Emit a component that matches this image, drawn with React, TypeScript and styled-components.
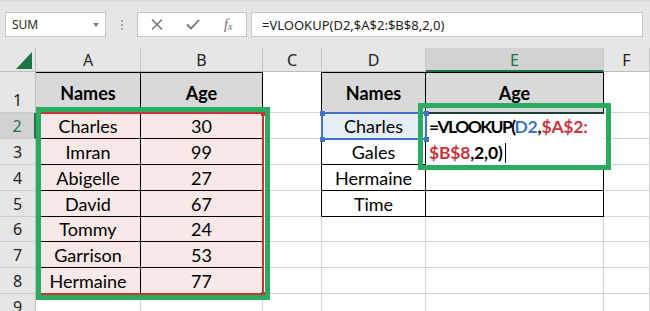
import React from "react";
import styled, { createGlobalStyle } from "styled-components";

const GlobalStyle = createGlobalStyle`
  html, body {
    margin: 0;
    padding: 0;
    background: #fff;
  }
  body {
    overflow: hidden;
  }
`;

const EXCEL_GREEN = "#217346";
const GRID_LINE = "#d4d4d4";
const INK = "#000";
const REF_RED = "#c9343c";
const REF_BLUE = "#3f72c8";
const CALLOUT = "#2bab5f";

const Window = styled.div`
  width: 650px;
  height: 311px;
  overflow: hidden;
  background: #fff;
`;

/* ---------- formula bar ---------- */

const FormulaStrip = styled.div`
  height: 48px;
  box-sizing: border-box;
  padding: 12px 7px 0 5px;
  display: flex;
  align-items: flex-start;
  background: #e6e6e6;
  box-shadow: inset 0 3px 3px -2px rgba(0, 0, 0, 0.1);
`;

const NameBox = styled.div`
  width: 101px;
  height: 25px;
  box-sizing: border-box;
  border: 1px solid #c6c6c6;
  background: #fff;
  display: flex;
  align-items: center;
  justify-content: space-between;
  padding: 0 6px 0 6px;
  font-family: "Noto Sans", sans-serif;
  font-size: 12px;
  color: #262626;
`;

const Caret = styled.span`
  width: 0;
  height: 0;
  border-left: 3.5px solid transparent;
  border-right: 3.5px solid transparent;
  border-top: 4px solid #7a7a7a;
`;

const Grip = styled.div`
  width: 31px;
  height: 25px;
  display: flex;
  flex-direction: column;
  align-items: center;
  justify-content: center;
  gap: 2px;

  span {
    width: 2px;
    height: 2px;
    background: #a8a8a8;
  }
`;

const ButtonGroup = styled.div`
  width: 110px;
  height: 25px;
  box-sizing: border-box;
  border: 1px solid #c6c6c6;
  background: #fff;
  display: flex;
  align-items: center;
  padding-left: 1px;
`;

const BarButton = styled.div`
  width: 36px;
  height: 23px;
  display: flex;
  align-items: center;
  justify-content: center;
  color: #6e6e6e;
`;

const FxLabel = styled.span`
  font-family: "Liberation Serif", serif;
  font-style: italic;
  font-size: 14px;
  color: #6a6a6a;

  sub {
    font-size: 10px;
    vertical-align: -1px;
  }
`;

const FormulaInput = styled.div`
  flex: 1;
  height: 25px;
  margin-left: 4px;
  box-sizing: border-box;
  border: 1px solid #c6c6c6;
  background: #fff;
  display: flex;
  align-items: center;
  padding-left: 10px;
  font-family: "Noto Sans", sans-serif;
  font-size: 13px;
  color: #222;
`;

/* ---------- sheet grid ---------- */

const Sheet = styled.div`
  display: grid;
  grid-template-columns: 36px 105px 122px 59px 104px 178px 46px;
  grid-template-rows: 24px 41px repeat(4, 26px) 25px repeat(3, 26px);
`;

const Corner = styled.div`
  grid-row: 1;
  grid-column: 1;
  background: #e6e6e6;
  box-sizing: border-box;
  border-right: 1px solid #bdbdbd;
  border-bottom: 1px solid #bdbdbd;
  display: flex;
  align-items: flex-end;
  justify-content: flex-end;
  padding: 0 3px 2px 0;
`;

const ColHead = styled.div<{ $col: number; $active?: boolean }>`
  grid-row: 1;
  grid-column: ${(p) => p.$col};
  box-sizing: border-box;
  background: ${(p) => (p.$active ? "#d2d2d2" : "#e6e6e6")};
  border-right: 1px solid #c6c6c6;
  border-bottom: ${(p) =>
    p.$active ? `2px solid ${EXCEL_GREEN}` : "1px solid #bdbdbd"};
  display: flex;
  align-items: center;
  justify-content: center;
  padding-top: 1px;
  font-family: "Noto Sans", sans-serif;
  font-size: 16px;
  color: ${(p) => (p.$active ? EXCEL_GREEN : "#222")};
`;

const RowHead = styled.div<{ $row: number; $active?: boolean }>`
  grid-row: ${(p) => p.$row};
  grid-column: 1;
  box-sizing: border-box;
  background: ${(p) => (p.$active ? "#d2d2d2" : "#e6e6e6")};
  border-bottom: 1px solid #cbcbcb;
  border-right: ${(p) =>
    p.$active ? `2px solid ${EXCEL_GREEN}` : "1px solid #bdbdbd"};
  display: flex;
  align-items: flex-end;
  justify-content: center;
  padding-bottom: 1px;
  font-family: "Noto Sans", sans-serif;
  font-size: 16px;
  line-height: 22px;
  color: ${(p) => (p.$active ? EXCEL_GREEN : "#222")};
`;

const Cell = styled.div<{
  $row: number;
  $col: number;
  $fill: string;
  $right: string;
  $bottom: string;
  $top?: string;
  $bold?: boolean;
}>`
  grid-row: ${(p) => p.$row};
  grid-column: ${(p) => p.$col};
  box-sizing: border-box;
  background: ${(p) => p.$fill};
  border-right: 1px solid ${(p) => p.$right};
  border-bottom: 1px solid ${(p) => p.$bottom};
  border-top: ${(p) => (p.$top ? `1px solid ${p.$top}` : "none")};
  display: flex;
  align-items: center;
  justify-content: center;
  font-family: Lato, "Liberation Sans", sans-serif;
  font-size: 18px;
  font-weight: ${(p) => (p.$bold ? 700 : 400)};
  color: #000;
  white-space: nowrap;
`;

/* cell being edited, grown over the row below */
const EditBox = styled.div`
  grid-row: 3 / 5;
  grid-column: 6;
  position: relative;
  z-index: 1;
  margin-top: -1px;
  background: #fff;
  border-top: 2px solid #1d3f2c;
  padding: 0 0 0 3px;
  font-family: Lato, "Liberation Sans", sans-serif;
  font-size: 17.5px;
  font-weight: 700;
  letter-spacing: -0.2px;
  line-height: 26px;
  color: #000;
  white-space: nowrap;
`;

const FnName = styled.span`
  letter-spacing: -1.6px;
`;

const Ref = styled.span<{ $color: string }>`
  color: ${(p) => p.$color};
`;

const TextCursor = styled.span`
  display: inline-block;
  width: 1px;
  height: 20px;
  margin-left: 3px;
  background: #000;
  vertical-align: -4px;
`;

const RefOutline = styled.div<{
  $rows: string;
  $cols: string;
  $color: string;
  $margin: string;
}>`
  grid-row: ${(p) => p.$rows};
  grid-column: ${(p) => p.$cols};
  position: relative;
  z-index: 2;
  margin: ${(p) => p.$margin};
  border: 2px solid ${(p) => p.$color};
  pointer-events: none;
`;

const Handle = styled.span<{ $color: string; $h: "left" | "right"; $v: "top" | "bottom" }>`
  position: absolute;
  width: 5px;
  height: 5px;
  background: ${(p) => p.$color};
  ${(p) => p.$h}: -3.5px;
  ${(p) => p.$v}: -3.5px;
`;

const Callout = styled.div<{ $rows: string; $cols: string; $margin: string }>`
  grid-row: ${(p) => p.$rows};
  grid-column: ${(p) => p.$cols};
  position: relative;
  z-index: 3;
  margin: ${(p) => p.$margin};
  border: 5px solid ${CALLOUT};
  pointer-events: none;
`;

/* ---------- data ---------- */

const letters = ["A", "B", "C", "D", "E", "F"];

const people: [string, number][] = [
  ["Charles", 30],
  ["Imran", 99],
  ["Abigelle", 27],
  ["David", 67],
  ["Tommy", 24],
  ["Garrison", 53],
  ["Hermaine", 77],
];

const lookups = ["Charles", "Gales", "Hermaine", "Time"];

type CellSpec = {
  text: string;
  bold: boolean;
  fill: string;
  right: string;
  bottom: string;
  top?: string;
};

const specFor = (r: number, c: number): CellSpec => {
  const spec: CellSpec = {
    text: "",
    bold: false,
    fill: "#fff",
    right: GRID_LINE,
    bottom: GRID_LINE,
  };
  const inSource = c <= 1 && r <= 8;
  const inLookup = (c === 3 || c === 4) && r <= 5;

  if (inSource || inLookup) {
    spec.right = INK;
    spec.bottom = INK;
    if (r === 1) {
      spec.top = INK;
      spec.fill = "#d9d9d9";
      spec.bold = true;
    }
  }
  if (c === 2 && r <= 5) spec.right = INK;

  if (inSource) {
    if (r === 1) spec.text = c === 0 ? "Names" : "Age";
    else {
      spec.fill = "#f9e8e8";
      const [name, age] = people[r - 2];
      spec.text = c === 0 ? name : String(age);
    }
  }
  if (inLookup) {
    if (r === 1) spec.text = c === 3 ? "Names" : "Age";
    else if (c === 3) spec.text = lookups[r - 2];
    if (r === 2 && c === 3) spec.fill = "#e8eef8";
  }
  return spec;
};

type Corner = ["left" | "right", "top" | "bottom"];
const allCorners: Corner[] = [
  ["left", "top"],
  ["right", "top"],
  ["left", "bottom"],
  ["right", "bottom"],
];
// the left pair of the source range sits under the callout frame
const rightCorners: Corner[] = [
  ["right", "top"],
  ["right", "bottom"],
];

const App = () => {
  const rows = [1, 2, 3, 4, 5, 6, 7, 8, 9];

  return (
    <Window>
      <GlobalStyle />
      <FormulaStrip>
        <NameBox>
          SUM
          <Caret />
        </NameBox>
        <Grip>
          <span />
          <span />
          <span />
        </Grip>
        <ButtonGroup>
          <BarButton>
            <svg width="12" height="11" viewBox="0 0 12 11">
              <path d="M1 0.5 L11 10.5 M11 0.5 L1 10.5" stroke="#707070" strokeWidth="1.4" />
            </svg>
          </BarButton>
          <BarButton>
            <svg width="14" height="11" viewBox="0 0 14 11">
              <path d="M1 5.5 L5 9.5 L13 1" stroke="#707070" strokeWidth="1.8" fill="none" />
            </svg>
          </BarButton>
          <BarButton>
            <FxLabel>
              f<sub>x</sub>
            </FxLabel>
          </BarButton>
        </ButtonGroup>
        <FormulaInput>=VLOOKUP(D2,$A$2:$B$8,2,0)</FormulaInput>
      </FormulaStrip>

      <Sheet>
        <Corner>
          <svg width="16" height="17" viewBox="0 0 16 17">
            <polygon points="16,0 16,17 0,17" fill="#1f7244" />
          </svg>
        </Corner>
        {letters.map((l, i) => (
          <ColHead key={l} $col={i + 2} $active={l === "E"}>
            {l}
          </ColHead>
        ))}
        {rows.map((r) => (
          <RowHead key={`h${r}`} $row={r + 1} $active={r === 2}>
            {r}
          </RowHead>
        ))}
        {rows.map((r) =>
          letters.map((l, c) => {
            const s = specFor(r, c);
            return (
              <Cell
                key={`${l}${r}`}
                $row={r + 1}
                $col={c + 2}
                $fill={s.fill}
                $right={s.right}
                $bottom={s.bottom}
                $top={s.top}
                $bold={s.bold}
              >
                {s.text}
              </Cell>
            );
          })
        )}

        <EditBox>
          <FnName>=VLOOKUP(</FnName>
          <Ref $color={REF_BLUE}>D2</Ref>,<Ref $color={REF_RED}>$A$2:</Ref>
          <br />
          <Ref $color={REF_RED}>$B$8</Ref>,2,0)
          <TextCursor />
        </EditBox>

        <RefOutline $rows="3 / 10" $cols="2 / 4" $color={REF_RED} $margin="-1px -1px -1px 0">
          {rightCorners.map(([h, v]) => (
            <Handle key={h + v} $color={REF_RED} $h={h} $v={v} />
          ))}
        </RefOutline>
        <RefOutline $rows="3" $cols="5" $color={REF_BLUE} $margin="-1px">
          {allCorners.map(([h, v]) => (
            <Handle key={h + v} $color={REF_BLUE} $h={h} $v={v} />
          ))}
        </RefOutline>

        <Callout $rows="3 / 10" $cols="2 / 4" $margin="-6px -7px -6px 0" />
        <Callout $rows="3 / 5" $cols="6" $margin="-10px -7px -5px -8px" />
      </Sheet>
    </Window>
  );
};

export default App;
